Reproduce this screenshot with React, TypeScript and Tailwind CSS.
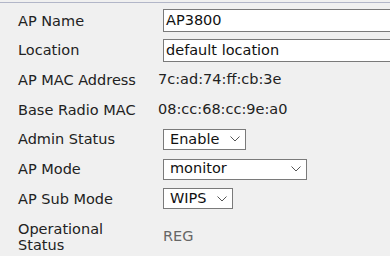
import React from "react";

const font = { fontFamily: '"DejaVu Sans", Verdana, sans-serif' };

const Chevron = ({ w = 10 }: { w?: number }) => (
  <svg width={w} height="6" viewBox={`0 0 ${w} 6`} className="shrink-0">
    <path d={`M0.5 0.5 L${w / 2} 5 L${w - 0.5} 0.5`} fill="none" stroke="#555" strokeWidth="1" />
  </svg>
);

const Select = ({ value, width }: { value: string; width: string }) => (
  <div
    className={`flex items-center justify-between h-[21px] bg-white border border-[#7a7a7a] pl-[6px] pr-[5px] text-[14.5px] text-[#111] ${width}`}
  >
    <span>{value}</span>
    <Chevron />
  </div>
);

const Input = ({ value }: { value: string }) => (
  <div className="flex items-center h-[23px] w-[240px] bg-white border-y border-l border-[#7a7a7a] pl-[2px] text-[14.5px] text-[#111]">
    {value}
  </div>
);

const Row = ({ label, children }: { label: React.ReactNode; children: React.ReactNode }) => (
  <div className="flex items-center h-[29.67px]">
    <div className="w-[163px] shrink-0 pl-[18px] text-[14.5px] text-[#222] leading-[16px]">{label}</div>
    <div className="flex-1 flex items-center">{children}</div>
  </div>
);

export default function App() {
  return (
    <div className="w-[390px] h-[268px] bg-white overflow-hidden" style={font}>
      <div className="bg-[#f0f0f0] h-[256px] pt-[2px]">
        <div className="border-t border-[#b2b6c8] pt-[3px]">
          <Row label="AP Name">
            <Input value="AP3800" />
          </Row>
          <Row label="Location">
            <Input value="default location" />
          </Row>
          <Row label="AP MAC Address">
            <span className="-ml-[5px] text-[14.5px] text-[#222]">7c:ad:74:ff:cb:3e</span>
          </Row>
          <Row label="Base Radio MAC">
            <span className="-ml-[5px] text-[14.5px] text-[#222]">08:cc:68:cc:9e:a0</span>
          </Row>
          <Row label="Admin Status">
            <Select value="Enable" width="w-[83px]" />
          </Row>
          <Row label="AP Mode">
            <Select value="monitor" width="w-[144px]" />
          </Row>
          <Row label="AP Sub Mode">
            <Select value="WIPS" width="w-[70px]" />
          </Row>
          <div className="flex items-center h-[46px]">
            <div className="w-[163px] shrink-0 pl-[18px] text-[14.5px] text-[#222] leading-[16px]">
              Operational
              <br />
              Status
            </div>
            <span className="text-[14.5px] text-[#666]">REG</span>
          </div>
        </div>
      </div>
    </div>
  );
}
